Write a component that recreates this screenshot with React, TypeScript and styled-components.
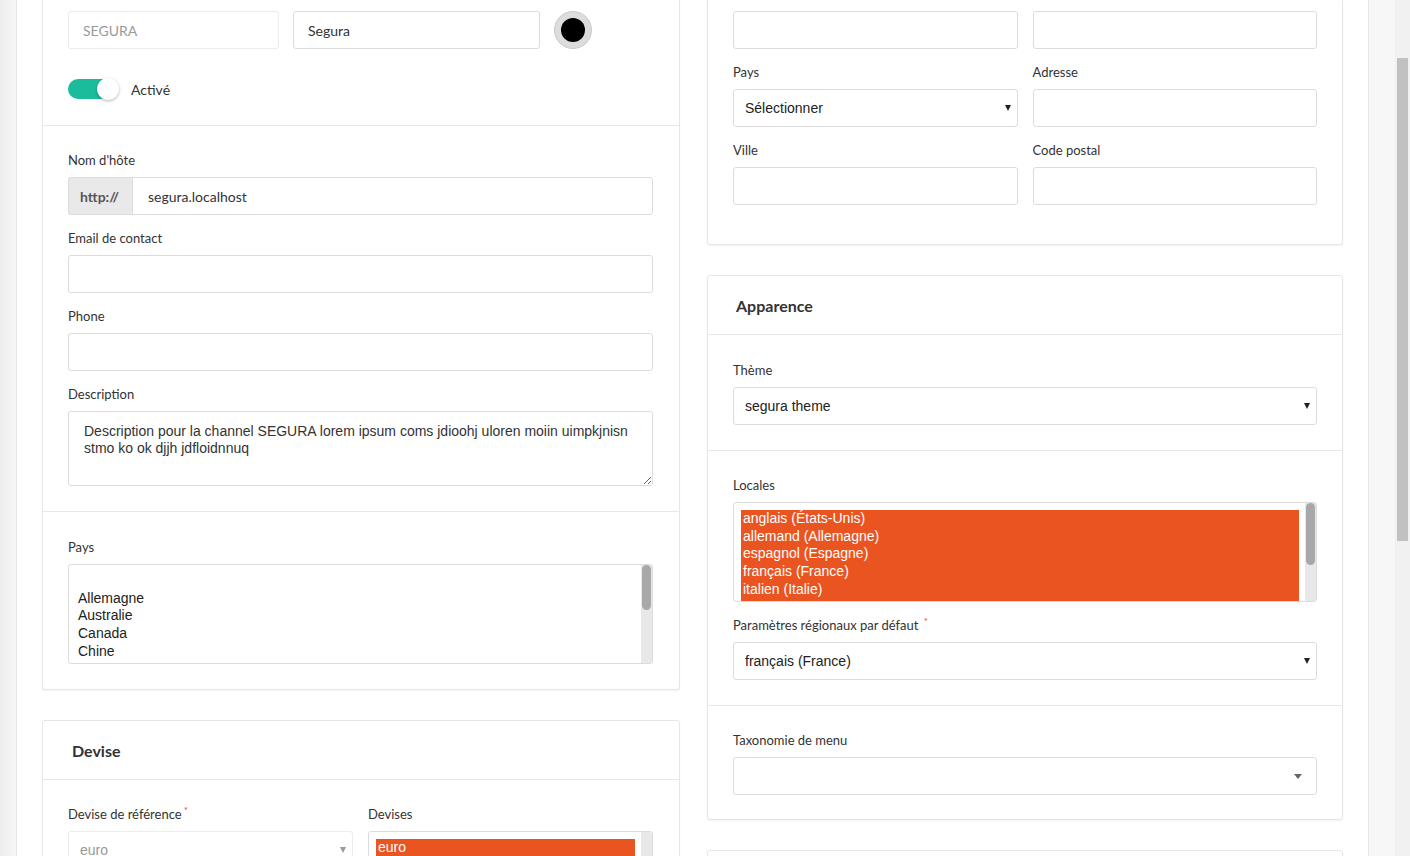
import React from "react";
import styled, { createGlobalStyle } from "styled-components";

const GlobalStyle = createGlobalStyle`
  html, body { margin: 0; padding: 0; overflow: hidden; background: #fff; }
  body { font-family: Lato, "Liberation Sans", sans-serif; color: #333; }
  * { box-sizing: border-box; }
`;

const Page = styled.div`
  display: flex;
  width: 1410px;
  height: 856px;
  overflow: hidden;
`;

const LeftGutter = styled.div`
  flex: none;
  width: 17px;
  background: linear-gradient(to right, #ececec, #f7f7f7);
  border-right: 1px solid #e3e3e3;
`;

const Main = styled.main`
  flex: none;
  width: 1352px;
  height: 856px;
  overflow: hidden;
  background: #fff;
  border-right: 1px solid #e6e6e6;
  padding-left: 25px;
  display: grid;
  grid-template-columns: 638px 636px;
  column-gap: 27px;
  align-items: start;
`;

const RightGutter = styled.div`
  flex: none;
  width: 26px;
  background: #f7f7f7;
`;

const PageScrollbar = styled.div`
  flex: none;
  width: 15px;
  background: #f1f1f1;
  padding: 58px 2px 0;
`;

const PageThumb = styled.div`
  height: 483px;
  background: #c1c1c1;
`;

const Column = styled.div`
  display: flex;
  flex-direction: column;
  gap: 30px;
`;

const Card = styled.section<{ $cutTop?: boolean }>`
  background: #fff;
  border: 1px solid #e6e6e6;
  border-radius: 3px;
  box-shadow: 0 1px 2px rgba(0, 0, 0, 0.05);
  ${(p) => p.$cutTop && `border-top: none; border-top-left-radius: 0; border-top-right-radius: 0;`}
`;

const CardHeader = styled.header<{ $indent: number }>`
  height: 59px;
  display: flex;
  align-items: center;
  padding-left: ${(p) => p.$indent}px;
  font-family: Lato, sans-serif;
  font-weight: 700;
  font-size: 16px;
  color: #333;
  border-bottom: 1px solid #e8e8e8;
`;

const Section = styled.div<{ $top?: number; $bottom?: number; $right?: number }>`
  padding: ${(p) => p.$top ?? 25}px ${(p) => p.$right ?? 25}px ${(p) => p.$bottom ?? 25}px 25px;
  & + & {
    border-top: 1px solid #e8e8e8;
  }
`;

const Stack = styled.div`
  display: flex;
  flex-direction: column;
  gap: 14px;
`;

const TwoCols = styled.div`
  display: grid;
  grid-template-columns: 1fr 1fr;
  column-gap: 15px;
  row-gap: 14px;
`;

const Field = styled.div`
  display: flex;
  flex-direction: column;
`;

const Label = styled.label`
  font-family: Lato, sans-serif;
  font-size: 13px;
  line-height: 18px;
  color: #333;
  margin-bottom: 8px;
`;

const Required = styled.span`
  color: #e74c3c;
  font-size: 10px;
  vertical-align: super;
  line-height: 0;
  margin-left: 2px;
`;

const Input = styled.input<{ $w?: number; $muted?: boolean }>`
  display: block;
  height: 38px;
  width: ${(p) => (p.$w ? `${p.$w}px` : "100%")};
  flex: none;
  border: 1px solid ${(p) => (p.$muted ? "#ececec" : "#dcdcdc")};
  border-radius: 3px;
  padding: 0 14px;
  font-family: Lato, sans-serif;
  font-size: 14px;
  color: ${(p) => (p.$muted ? "#9a9a9a" : "#333")};
  background: #fff;
  outline: none;
`;

const Row = styled.div`
  display: flex;
  align-items: center;
  gap: 14px;
`;

const Swatch = styled.div`
  width: 38px;
  height: 38px;
  border-radius: 50%;
  background: #dcdcdc;
  border: 1px solid #c9c9c9;
  display: flex;
  align-items: center;
  justify-content: center;
`;

const SwatchDot = styled.div`
  width: 24px;
  height: 24px;
  border-radius: 50%;
  background: #000;
`;

const ToggleRow = styled.div`
  display: flex;
  align-items: center;
  gap: 13px;
  margin-top: 29px;
  height: 22px;
  font-family: Lato, sans-serif;
  font-size: 14px;
  color: #333;
`;

const ToggleTrack = styled.div`
  width: 50px;
  height: 20px;
  border-radius: 10px;
  background: #1abc9c;
  display: flex;
  align-items: center;
  justify-content: flex-end;
`;

const ToggleKnob = styled.div`
  width: 22px;
  height: 22px;
  margin-right: -1px;
  border-radius: 50%;
  background: #fff;
  box-shadow: 0 1px 3px rgba(0, 0, 0, 0.3);
`;

const InputGroup = styled.div`
  display: flex;
  height: 38px;
`;

const Addon = styled.span`
  width: 64px;
  flex: none;
  display: flex;
  align-items: center;
  padding-left: 11px;
  background: #e9e9e9;
  border: 1px solid #dcdcdc;
  border-right: none;
  border-radius: 3px 0 0 3px;
  font-family: Lato, sans-serif;
  font-weight: 700;
  font-size: 14px;
  color: #555;
`;

const GroupInput = styled(Input)`
  flex: 1;
  width: auto;
  min-width: 0;
  border-radius: 0 3px 3px 0;
  padding-left: 15px;
`;

const TextArea = styled.textarea`
  display: block;
  height: 75px;
  width: 100%;
  border: 1px solid #dcdcdc;
  border-radius: 3px;
  padding: 11px 15px;
  font-family: "Liberation Sans", Arial, sans-serif;
  font-size: 14px;
  line-height: 17px;
  color: #333;
  outline: none;
  resize: vertical;
`;

const SelectBox = styled.div<{ $disabled?: boolean }>`
  height: 38px;
  border: 1px solid ${(p) => (p.$disabled ? "#ececec" : "#dcdcdc")};
  border-radius: 3px;
  display: flex;
  align-items: center;
  justify-content: space-between;
  padding: 0 6px 0 11px;
  font-family: "Liberation Sans", Arial, sans-serif;
  font-size: 14px;
  color: ${(p) => (p.$disabled ? "#999" : "#222")};
  background: #fff;
`;

const Caret = styled.span<{ $muted?: boolean }>`
  width: 0;
  height: 0;
  border-left: 3px solid transparent;
  border-right: 3px solid transparent;
  border-top: 6px solid ${(p) => (p.$muted ? "#999" : "#222")};
`;

const ComboBox = styled(SelectBox)`
  padding-right: 14px;
`;

const ComboCaret = styled.span`
  width: 0;
  height: 0;
  border-left: 4px solid transparent;
  border-right: 4px solid transparent;
  border-top: 5px solid #666;
`;

const ListBox = styled.div`
  height: 100px;
  border: 1px solid #dcdcdc;
  border-radius: 3px;
  display: flex;
  overflow: hidden;
  background: #fff;
`;

const ListOptions = styled.div`
  flex: 1;
  padding: 7px 6px 0 7px;
  overflow: hidden;
`;

const ListOption = styled.div<{ $selected?: boolean }>`
  height: 17.7px;
  line-height: 17.7px;
  padding-left: 2px;
  font-family: "Liberation Sans", Arial, sans-serif;
  font-size: 14px;
  white-space: nowrap;
  color: ${(p) => (p.$selected ? "#fff" : "#222")};
  background: ${(p) => (p.$selected ? "#e95420" : "transparent")};
`;

const ListTrack = styled.div`
  flex: none;
  width: 11px;
  background: #e8e8e8;
`;

const ListThumb = styled.div<{ $h: number }>`
  height: ${(p) => p.$h}px;
  margin: 0 1px;
  border-radius: 5px;
  background: #a8a8a8;
`;

type ListProps = { options: { label: string; selected?: boolean }[]; thumb?: number };

const MultiSelect = ({ options, thumb }: ListProps) => (
  <ListBox>
    <ListOptions>
      {options.map((o, i) => (
        <ListOption key={i} $selected={o.selected}>
          {o.label || "\u00a0"}
        </ListOption>
      ))}
    </ListOptions>
    <ListTrack>{thumb ? <ListThumb $h={thumb} /> : null}</ListTrack>
  </ListBox>
);

const Select = ({ value, disabled }: { value: string; disabled?: boolean }) => (
  <SelectBox $disabled={disabled}>
    <span>{value}</span>
    <Caret $muted={disabled} />
  </SelectBox>
);

const LeftCards = () => (
  <Column>
    <Card $cutTop>
      <Section $top={11} $bottom={25} $right={26}>
        <Row>
          <Input $w={211} $muted defaultValue="SEGURA" readOnly />
          <Input $w={247} defaultValue="Segura" readOnly />
          <Swatch>
            <SwatchDot />
          </Swatch>
        </Row>
        <ToggleRow>
          <ToggleTrack>
            <ToggleKnob />
          </ToggleTrack>
          Activé
        </ToggleRow>
      </Section>
      <Section $right={26}>
        <Stack>
          <Field>
            <Label>Nom d'hôte</Label>
            <InputGroup>
              <Addon>http://</Addon>
              <GroupInput defaultValue="segura.localhost" readOnly />
            </InputGroup>
          </Field>
          <Field>
            <Label>Email de contact</Label>
            <Input readOnly />
          </Field>
          <Field>
            <Label>Phone</Label>
            <Input readOnly />
          </Field>
          <Field>
            <Label>Description</Label>
            <TextArea
              readOnly
              defaultValue="Description pour la channel SEGURA lorem ipsum coms jdioohj uloren moiin uimpkjnisn stmo ko ok djjh jdfloidnnuq"
            />
          </Field>
        </Stack>
      </Section>
      <Section $top={26} $right={26}>
        <Field>
          <Label>Pays</Label>
          <MultiSelect
            thumb={45}
            options={[{ label: "" }, { label: "Allemagne" }, { label: "Australie" }, { label: "Canada" }, { label: "Chine" }]}
          />
        </Field>
      </Section>
    </Card>
    <Card>
      <CardHeader $indent={29}>Devise</CardHeader>
      <Section $right={26}>
        <TwoCols>
          <Field>
            <Label>
              Devise de référence<Required>*</Required>
            </Label>
            <Select value="euro" disabled />
          </Field>
          <Field>
            <Label>Devises</Label>
            <MultiSelect options={[{ label: "euro", selected: true }]} />
          </Field>
        </TwoCols>
      </Section>
    </Card>
  </Column>
);

const RightCards = () => (
  <Column>
    <Card $cutTop>
      <Section $top={11} $bottom={39}>
        <TwoCols>
          <Input readOnly />
          <Input readOnly />
          <Field>
            <Label>Pays</Label>
            <Select value="Sélectionner" />
          </Field>
          <Field>
            <Label>Adresse</Label>
            <Input readOnly />
          </Field>
          <Field>
            <Label>Ville</Label>
            <Input readOnly />
          </Field>
          <Field>
            <Label>Code postal</Label>
            <Input readOnly />
          </Field>
        </TwoCols>
      </Section>
    </Card>
    <Card>
      <CardHeader $indent={28}>Apparence</CardHeader>
      <Section $top={26}>
        <Field>
          <Label>Thème</Label>
          <Select value="segura theme" />
        </Field>
      </Section>
      <Section>
        <Stack>
          <Field>
            <Label>Locales</Label>
            <MultiSelect
              thumb={62}
              options={[
                { label: "anglais (États-Unis)", selected: true },
                { label: "allemand (Allemagne)", selected: true },
                { label: "espagnol (Espagne)", selected: true },
                { label: "français (France)", selected: true },
                { label: "italien (Italie)", selected: true },
                { label: "", selected: true },
              ]}
            />
          </Field>
          <Field>
            <Label>
              Paramètres régionaux par défaut <Required>*</Required>
            </Label>
            <Select value="français (France)" />
          </Field>
        </Stack>
      </Section>
      <Section $bottom={24}>
        <Field>
          <Label>Taxonomie de menu</Label>
          <ComboBox>
            <span />
            <ComboCaret />
          </ComboBox>
        </Field>
      </Section>
    </Card>
    <Card>
      <CardHeader $indent={28}> </CardHeader>
    </Card>
  </Column>
);

export default function App() {
  return (
    <>
      <GlobalStyle />
      <Page>
        <LeftGutter />
        <Main>
          <LeftCards />
          <RightCards />
        </Main>
        <RightGutter />
        <PageScrollbar>
          <PageThumb />
        </PageScrollbar>
      </Page>
    </>
  );
}
